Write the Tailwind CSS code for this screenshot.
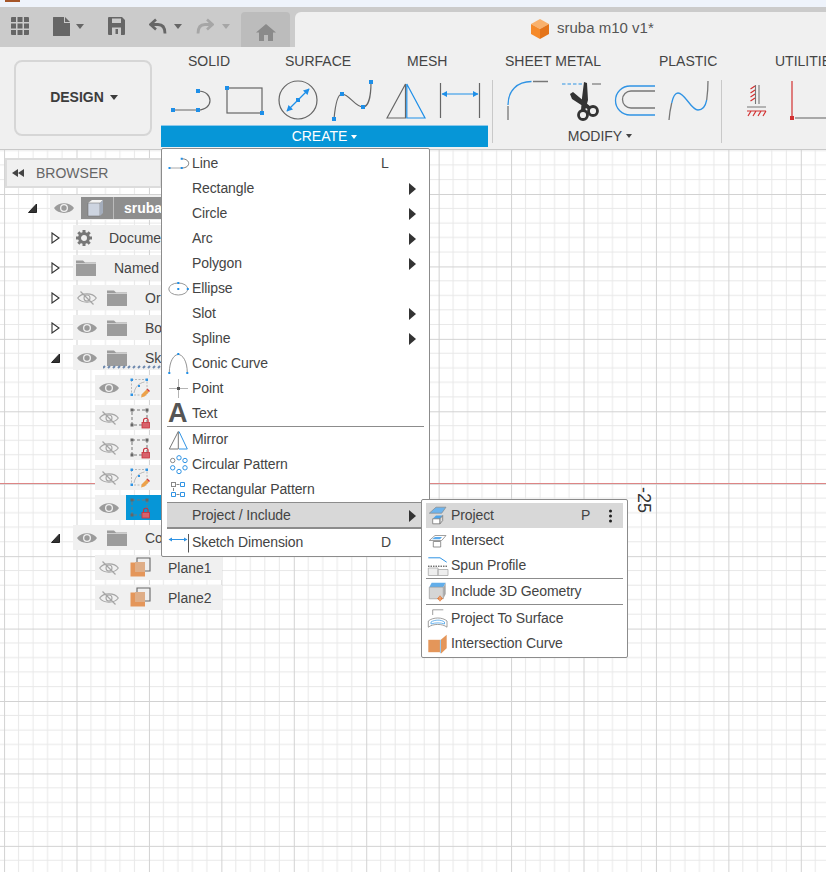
<!DOCTYPE html>
<html lang="en">

<head>
  <meta charset="UTF-8" />
  <title>sruba m10 v1*</title>
  <script src="https://cdn.jsdelivr.net/npm/@tailwindcss/browser@4"></script>
</head>

<body class="relative w-[826px] h-[872px] overflow-hidden bg-white text-[14px] text-[#444] font-['Liberation_Sans',sans-serif]">

  <!-- shared icons -->
  <svg class="hidden">
    <symbol id="eye" viewBox="0 0 20 14">
      <path d="M0 7C4 0.500 16 0.500 20 7C16 13.500 4 13.500 0 7Z" fill="#9b9b9b" />
      <circle cx="10" cy="7" r="4" fill="#f0f0f0" />
      <circle cx="10" cy="7" r="2.700" fill="#9b9b9b" />
    </symbol>
    <symbol id="eye-off" viewBox="0 0 20 14">
      <path d="M0.700 7C4.500 1.500 15.500 1.500 19.300 7C15.500 12.500 4.500 12.500 0.700 7Z" fill="none" stroke="#a5a5a5" stroke-width="1.100" />
      <circle cx="10" cy="7" r="3" fill="none" stroke="#a5a5a5" stroke-width="1.100" />
      <path d="M3.500 0.500L16.500 13.500" stroke="#a5a5a5" stroke-width="1.300" />
    </symbol>
    <symbol id="folder" viewBox="0 0 20 16">
      <path d="M0 0.500H7L9 2.500H20V16H0Z" fill="#9c9c9c" />
      <path d="M0 3.500H20" stroke="#f0f0f0" stroke-width="0.600" />
    </symbol>
    <symbol id="sketch-edit" viewBox="0 0 20 22">
      <rect x="1.500" y="2.500" width="15.500" height="15.500" fill="none" stroke="#aaa" stroke-width="0.800" stroke-dasharray="2 1.500" />
      <path d="M4 16C5 10 9 6 14.500 5" fill="none" stroke="#aaa" stroke-width="0.800" />
      <path d="M0.500 1.500h2.500v2.500H0.500zM15.500 1.500h2.500v2.500h-2.500zM0.500 16.500h2.500v2.500H0.500zM8 8h2v2H8z" fill="#2f93e4" />
      <path d="M11 20.500l1-3.500 4.500-4.500 2.500 2.500-4.500 4.500z" fill="#eda24a" />
      <path d="M16.500 12.500l1-1 2.500 2.500-1 1z" fill="#d43c3c" />
    </symbol>
    <symbol id="sketch-lock" viewBox="0 0 20 22">
      <rect x="2" y="3" width="15" height="15" fill="none" stroke="#777" stroke-dasharray="3 2" />
      <path d="M0.500 1.500h3v3h-3zM15.500 1.500h3v3h-3zM0.500 16.500h3v3h-3z" fill="#666" />
      <path d="M13.500 15.500V13.500a2.300 2.300 0 0 1 4.600 0V15.500" fill="none" stroke="#c8323c" stroke-width="1.100" />
      <rect x="12" y="15.500" width="7.500" height="5.500" fill="#d8616b" stroke="#c8323c" stroke-width="0.800" />
    </symbol>
    <symbol id="plane" viewBox="0 0 21 21">
      <path d="M7 5V1H20V14H15" fill="none" stroke="#666" stroke-width="1.100" />
      <rect x="0.500" y="5.500" width="14.500" height="14" fill="#e4965a" />
      <rect x="5" y="5" width="10" height="10" fill="#dfae88" />
    </symbol>
  </svg>

  <!-- browser strip -->
  <div class="h-[7px] bg-[#eef3fb]">
    <div class="ml-[5px] w-[15px] h-[2px] bg-[#a5562a]"></div>
  </div>

  <!-- document tabs -->
  <div class="flex h-[40px] bg-[#cbcbcb]">
    <div class="flex items-center w-[241px] pb-[2px]">
      <svg class="ml-[11px]" width="18" height="18" viewBox="0 0 18 18" fill="#666">
        <path d="M0 1a1 1 0 0 1 1-1h4v5H0zM6.500 0h5v5h-5zM13 0h4a1 1 0 0 1 1 1v4h-5zM0 6.500h5v5H0zM6.500 6.500h5v5h-5zM13 6.500h5v5h-5zM0 13h5v5H1a1 1 0 0 1-1-1zM6.500 13h5v5h-5zM13 13h5v4a1 1 0 0 1-1 1h-4z" />
      </svg>
      <svg class="ml-[24px]" width="17" height="19" viewBox="0 0 17 19" fill="#666">
        <path d="M0 0.500A.5.5 0 0 1 .5 0H11V6H17V18.500A.5.5 0 0 1 16.500 19H.5A.5.5 0 0 1 0 18.500Z" />
        <path d="M12 0L17 5H12Z" />
      </svg>
      <span class="ml-[6px] border-x-[4.500px] border-t-[5px] border-x-transparent border-t-[#666]"></span>
      <svg class="ml-[24px]" width="17" height="18" viewBox="0 0 17 18" fill="#666">
        <path fill-rule="evenodd" d="M1 0H14L17 3V17a1 1 0 0 1-1 1H1a1 1 0 0 1-1-1V1a1 1 0 0 1 1-1ZM4 1.500V6H13V1.500ZM4 10.500V18H13V10.500Z" />
        <rect x="7.500" y="12" width="2.500" height="5" />
      </svg>
      <svg class="ml-[24px]" width="18" height="17" viewBox="0 0 18 17" fill="none">
        <path d="M7 1.500L1.500 6.500L7 11.500" stroke="#666" stroke-width="2.600" />
        <path d="M2.500 6.500H9C13.500 6.500 16 9.500 16 15.500" stroke="#666" stroke-width="2.800" />
      </svg>
      <span class="ml-[7px] border-x-[4.500px] border-t-[5px] border-x-transparent border-t-[#666]"></span>
      <svg class="ml-[14px]" width="18" height="17" viewBox="0 0 18 17" fill="none">
        <path d="M11 1.500L16.500 6.500L11 11.500" stroke="#a6a6a6" stroke-width="2.600" />
        <path d="M15.500 6.500H9C4.500 6.500 2 9.500 2 15.500" stroke="#a6a6a6" stroke-width="2.800" />
      </svg>
      <span class="ml-[8px] border-x-[4.500px] border-t-[5px] border-x-transparent border-t-[#a6a6a6]"></span>
    </div>
    <div class="flex items-center justify-center w-[49px] mt-[5px] rounded-t bg-[#bcbcbc]">
      <svg class="mt-[6px]" width="20" height="17" viewBox="0 0 20 17" fill="#8a8a8a">
        <path d="M10 0L20 8.500H17V17H12V11H8V17H3V8.500H0Z" />
      </svg>
    </div>
    <div class="flex-1 flex items-center mt-[5px] ml-[5px] pb-[2px] pl-[236px] rounded-tl-md bg-[#f0f0f0]">
      <svg width="18" height="20" viewBox="0 0 18 20">
        <path d="M9 0L18 5L9 10L0 5Z" fill="#f9b16c" />
        <path d="M0 5L9 10V20L0 15Z" fill="#f58a2a" />
        <path d="M18 5L9 10V20L18 15Z" fill="#e4741a" />
      </svg>
      <span class="ml-[8px] text-[15px] text-[#555]">sruba m10 v1*</span>
    </div>
  </div>

  <!-- toolbar -->
  <div class="flex h-[103px] bg-[#f0f0f0] border-b border-[#c9c9c9]">
    <div class="flex items-center justify-center gap-[6px] ml-[14px] mt-[13px] pb-[2px] pl-[2px] w-[138px] h-[76px] rounded-lg border-2 border-[#d6d6d6] font-bold text-[#3c3c3c]">
      DESIGN
      <span class="border-x-[4px] border-t-[5px] border-x-transparent border-t-[#3c3c3c]"></span>
    </div>

    <div class="ml-[9px] flex flex-col w-[665px] shrink-0">
      <div class="flex items-center h-[28px] pl-[27px] whitespace-nowrap">
        <span class="w-[97px] shrink-0">SOLID</span>
        <span class="w-[122px] shrink-0">SURFACE</span>
        <span class="w-[98px] shrink-0">MESH</span>
        <span class="w-[154px] shrink-0">SHEET METAL</span>
        <span class="w-[116px] shrink-0">PLASTIC</span>
        <span class="w-[51px] shrink-0 overflow-hidden">UTILITIES</span>
      </div>

      <div class="flex mt-[5px]">
        <!-- create group -->
        <div class="w-[327px] shrink-0">
          <div class="flex gap-[10px] pl-[8px] h-[44px]">
            <svg width="44" height="44" viewBox="0 0 44 44" fill="none">
              <path d="M4 30H29M29 11C45 11 45 30 29 30" stroke="#666" stroke-width="1.200" />
              <path d="M2 28h4v4H2zM27 28h4v4h-4zM27 9h4v4h-4z" fill="#1e8fe8" />
            </svg>
            <svg width="44" height="44" viewBox="0 0 44 44" fill="none">
              <rect x="4" y="8" width="35" height="25" stroke="#666" stroke-width="1.200" />
              <path d="M2 6h4v4H2zM37 31h4v4h-4z" fill="#1e8fe8" />
            </svg>
            <svg width="44" height="44" viewBox="0 0 44 44" fill="none">
              <circle cx="21" cy="20" r="19" stroke="#666" stroke-width="1.200" />
              <path d="M10 31L32 9" stroke="#1e8fe8" stroke-width="1.300" />
              <path d="M32.500 8.500L26 10.500L30.500 15ZM9.500 31.500L16 29.500L11.500 25Z" fill="#1e8fe8" />
              <path d="M19 18h4v4h-4z" fill="#1e8fe8" />
            </svg>
            <svg width="44" height="44" viewBox="0 0 44 44" fill="none">
              <path d="M3 39C4 28 6 14 11 14C18 14 24 27 32 27C38 27 40 14 40 2" stroke="#666" stroke-width="1.200" />
              <path d="M1 37h4v4H1zM9 12h4v4H9zM30 25h4v4h-4zM38 0h4v4h-4z" fill="#1e8fe8" />
            </svg>
            <svg width="44" height="44" viewBox="0 0 44 44" fill="none">
              <path d="M2 38L20.500 4V38Z" stroke="#666" stroke-width="1.200" />
              <path d="M21.800 4L40 38H21.800Z" stroke="#1e8fe8" stroke-width="1.200" />
            </svg>
            <svg width="44" height="44" viewBox="0 0 44 44" fill="none">
              <path d="M1.500 3V38M40.500 3V38" stroke="#666" stroke-width="1.200" />
              <path d="M3 14H39" stroke="#1e8fe8" stroke-width="1.200" />
              <path d="M2.500 14L8 11V17ZM39.500 14L34 11V17Z" fill="#1e8fe8" />
            </svg>
          </div>
          <div class="flex items-center justify-center gap-[4px] mt-[1px] h-[22px] border-t border-[#8cc8ea] bg-[#0696d7] text-white">
            CREATE
            <span class="border-x-[3.500px] border-t-[4.500px] border-x-transparent border-t-white"></span>
          </div>
        </div>

        <div class="ml-[4px] w-px h-[63px] bg-[#c9c9c9] shrink-0"></div>

        <!-- modify group -->
        <div class="w-[228px] shrink-0">
          <div class="flex gap-[10px] pl-[13px] h-[44px]">
            <svg width="44" height="44" viewBox="0 0 44 44" fill="none">
              <path d="M2 25C2 11 11 1.500 25.500 1.500" stroke="#2f93e4" stroke-width="1.300" />
              <path d="M2 26V40M27 1.500H42" stroke="#777" stroke-width="1.300" />
            </svg>
            <svg width="44" height="44" viewBox="0 0 44 44" fill="none">
              <path d="M2 4H24" stroke="#2f93e4" stroke-width="1.200" stroke-dasharray="3.500 2" />
              <path d="M32 4H41" stroke="#777" stroke-width="1.200" />
              <path d="M10 14L13 12L31 27L29 30L12 19ZM24 2L27 3L28 20L25 31L21 30L22 18Z" fill="#333" />
              <circle cx="23" cy="35" r="4.500" stroke="#333" stroke-width="2.800" />
              <circle cx="33" cy="31" r="4.500" stroke="#333" stroke-width="2.800" />
            </svg>
            <svg width="44" height="44" viewBox="0 0 44 44" fill="none">
              <path d="M41 6H16A14.500 14.500 0 0 0 16 35H41" stroke="#2f93e4" stroke-width="1.300" />
              <path d="M41 11H17A8.500 8.500 0 0 0 17 28H41" stroke="#777" stroke-width="1.300" />
            </svg>
            <svg width="44" height="44" viewBox="0 0 44 44" fill="none">
              <path d="M1 40C1.500 33 2.500 28 3.700 23M38.700 20C39.500 14 40 8 40 1" stroke="#777" stroke-width="1.300" />
              <path d="M3.700 23C5 17 7 13 10 13C17 13 23 30 30 30C35 30 37.500 26 38.700 20" stroke="#2f93e4" stroke-width="1.300" />
            </svg>
          </div>
          <div class="flex items-center justify-center gap-[4px] mt-[1px] pr-[14px] h-[22px]">
            MODIFY
            <span class="border-x-[3.500px] border-t-[4.500px] border-x-transparent border-t-[#444]"></span>
          </div>
        </div>

        <div class="w-px h-[63px] bg-[#c9c9c9] shrink-0"></div>

        <!-- utilities group -->
        <div class="flex pl-[23px] h-[44px]">
          <svg width="40" height="44" viewBox="0 0 40 44" fill="none">
            <path d="M10.500 5V24M14 5V24M2 27H21" stroke="#777" stroke-width="1.100" />
            <path d="M10 6L5.500 9M10 10L5.500 13M10 14L5.500 17M10 18L5.500 21M2 31H21M6 31L3 36M11 31L8 36M16 31L13 36M21 31L18 36" stroke="#d23030" stroke-width="1.200" />
          </svg>
          <svg width="41" height="44" viewBox="0 0 41 44" fill="none">
            <path d="M7 1V36" stroke="#d23030" stroke-width="1.200" />
            <path d="M5 36h4v4H5z" fill="#d23030" />
            <path d="M10 38H41" stroke="#777" stroke-width="1.200" />
          </svg>
        </div>
      </div>
    </div>
  </div>

  <!-- canvas -->
  <div class="relative h-[722px] overflow-hidden">
    <svg class="absolute inset-0" width="826" height="722">
      <defs>
        <pattern id="grid" patternUnits="userSpaceOnUse" x="4.070" y="44" width="72.430" height="72.430">
          <path d="M14.490 0V72.430M28.970 0V72.430M43.460 0V72.430M57.940 0V72.430M0 14.490H72.430M0 28.970H72.430M0 43.460H72.430M0 57.940H72.430" stroke="#e8e8e8" />
          <path d="M0.500 0V72.430M0 0.500H72.430" stroke="#d2d2d2" />
        </pattern>
      </defs>
      <rect width="826" height="722" fill="url(#grid)" />
    </svg>
    <div class="absolute left-0 right-0 top-[333px] h-px bg-[#dd8585]"></div>
    <div class="absolute left-[635px] top-[337px] text-[18px] leading-[18px] text-[#333] [writing-mode:vertical-rl]">-25</div>

    <!-- browser panel header -->
    <div class="absolute left-[5px] top-[8px] flex items-center w-[157px] h-[30px] border-2 border-[#dcdcdc] bg-[#f0f0f0] text-[#666]">
      <svg class="ml-[5px]" width="12" height="8" viewBox="0 0 12 8" fill="#444">
        <path d="M6 0V8L0 4ZM12 0V8L6 4Z" />
      </svg>
      <span class="ml-[12px]">BROWSER</span>
    </div>

    <!-- browser tree, names are cut off where the create menu covers them -->
    <div class="absolute left-0 top-[45px] w-[222px] flex flex-col gap-[5px] whitespace-nowrap">
      <div class="flex items-center h-[25px] pl-[28px]">
        <svg class="w-[22px] shrink-0" width="22" height="10" viewBox="0 0 22 10"><path d="M0.500 9.500L8.500 1V9.500Z" fill="#333" stroke="#222" /></svg>
        <div class="flex items-center w-[111px] h-[25px] bg-[#f0f0f0] pl-[4px]">
          <svg width="20" height="14"><use href="#eye" /></svg>
          <div class="flex items-center ml-[7px] w-[80px] h-[22px] bg-[#8e8e8e] overflow-hidden">
            <svg class="ml-[6px] shrink-0" width="17" height="18" viewBox="0 0 17 18">
              <path d="M1 4L5 1H16L13 4Z" fill="#f4f4f4" />
              <path d="M1 4H13V17H1Z" fill="#cdd4e0" stroke="#666" stroke-width="0.500" />
              <path d="M13 4L16 1V14L13 17Z" fill="#a4adbc" />
            </svg>
            <div class="ml-[9px] mr-[10px] w-px h-[22px] bg-[#bbb] shrink-0"></div>
            <span class="mt-[2px] font-bold text-white">sruba</span>
          </div>
        </div>
      </div>

      <div class="flex items-center h-[25px] pl-[51px]">
        <svg class="w-[22px] shrink-0" width="22" height="12" viewBox="0 0 22 12"><path d="M1 1L8 6L1 11Z" fill="#fff" stroke="#333" stroke-width="1.100" /></svg>
        <div class="flex items-center w-[88px] h-[25px] bg-[#f0f0f0] overflow-hidden pl-[3px]">
          <svg class="shrink-0" width="16" height="16" viewBox="0 0 16 16">
            <circle cx="8" cy="8" r="4.500" fill="none" stroke="#777" stroke-width="3" />
            <path d="M8 0V3M8 13V16M0 8H3M13 8H16M2.300 2.300L4.500 4.500M11.500 11.500L13.700 13.700M13.700 2.300L11.500 4.500M4.500 11.500L2.300 13.700" stroke="#777" stroke-width="3" />
          </svg>
          <span class="ml-[17px] mt-[2px]">Documen</span>
        </div>
      </div>

      <div class="flex items-center h-[25px] pl-[51px]">
        <svg class="w-[22px] shrink-0" width="22" height="12" viewBox="0 0 22 12"><path d="M1 1L8 6L1 11Z" fill="#fff" stroke="#333" stroke-width="1.100" /></svg>
        <div class="flex items-center w-[88px] h-[25px] bg-[#f0f0f0] overflow-hidden pl-[3px]">
          <svg class="shrink-0" width="20" height="16"><use href="#folder" /></svg>
          <span class="ml-[18px] mt-[2px]">Named</span>
        </div>
      </div>

      <div class="flex items-center h-[25px] pl-[51px]">
        <svg class="w-[22px] shrink-0" width="22" height="12" viewBox="0 0 22 12"><path d="M1 1L8 6L1 11Z" fill="#fff" stroke="#333" stroke-width="1.100" /></svg>
        <div class="flex items-center w-[88px] h-[25px] bg-[#f0f0f0] overflow-hidden pl-[4px]">
          <svg class="shrink-0" width="20" height="14"><use href="#eye-off" /></svg>
          <svg class="ml-[10px] shrink-0" width="20" height="16"><use href="#folder" /></svg>
          <span class="ml-[18px] mt-[2px]">Or</span>
        </div>
      </div>

      <div class="flex items-center h-[25px] pl-[51px]">
        <svg class="w-[22px] shrink-0" width="22" height="12" viewBox="0 0 22 12"><path d="M1 1L8 6L1 11Z" fill="#fff" stroke="#333" stroke-width="1.100" /></svg>
        <div class="flex items-center w-[88px] h-[25px] bg-[#f0f0f0] overflow-hidden pl-[4px]">
          <svg class="shrink-0" width="20" height="14"><use href="#eye" /></svg>
          <svg class="ml-[10px] shrink-0" width="20" height="16"><use href="#folder" /></svg>
          <span class="ml-[18px] mt-[2px]">Bo</span>
        </div>
      </div>

      <div class="relative flex items-center h-[25px] pl-[51px]">
        <svg class="w-[22px] shrink-0" width="22" height="10" viewBox="0 0 22 10"><path d="M0.500 9.500L8.500 1V9.500Z" fill="#333" stroke="#222" /></svg>
        <div class="flex items-center w-[88px] h-[25px] bg-[#f0f0f0] overflow-hidden pl-[4px]">
          <svg class="shrink-0" width="20" height="14"><use href="#eye" /></svg>
          <svg class="ml-[10px] shrink-0" width="20" height="16"><use href="#folder" /></svg>
          <span class="ml-[18px] mt-[2px]">Sk</span>
        </div>
        <svg class="absolute left-[103px] top-[20px]" width="58" height="4" viewBox="0 0 58 4">
          <path d="M0 3L2 1M5 3L7 1M10 3L12 1M15 3L17 1M20 3L22 1M25 3L27 1M30 3L32 1M35 3L37 1M40 3L42 1M45 3L47 1M50 3L52 1M55 3L57 1" stroke="#6d88ad" stroke-width="2" />
        </svg>
      </div>

      <div class="flex items-center ml-[95px] w-[66px] h-[25px] bg-[#f0f0f0] pl-[4px]">
        <svg width="20" height="14"><use href="#eye" /></svg>
        <svg class="ml-[11px]" width="20" height="22"><use href="#sketch-edit" /></svg>
      </div>
      <div class="flex items-center ml-[95px] w-[66px] h-[25px] bg-[#f0f0f0] pl-[4px]">
        <svg width="20" height="14"><use href="#eye-off" /></svg>
        <svg class="ml-[11px]" width="20" height="22"><use href="#sketch-lock" /></svg>
      </div>
      <div class="flex items-center ml-[95px] w-[66px] h-[25px] bg-[#f0f0f0] pl-[4px]">
        <svg width="20" height="14"><use href="#eye-off" /></svg>
        <svg class="ml-[11px]" width="20" height="22"><use href="#sketch-lock" /></svg>
      </div>
      <div class="flex items-center ml-[95px] w-[66px] h-[25px] bg-[#f0f0f0] pl-[4px]">
        <svg width="20" height="14"><use href="#eye-off" /></svg>
        <svg class="ml-[11px]" width="20" height="22"><use href="#sketch-edit" /></svg>
      </div>
      <div class="flex items-center ml-[95px] w-[66px] h-[25px] bg-[#f0f0f0] pl-[4px]">
        <svg class="shrink-0" width="20" height="14"><use href="#eye" /></svg>
        <div class="flex items-center ml-[7px] w-[35px] h-[25px] bg-[#0696d7] pl-[4px]">
          <svg width="20" height="22"><use href="#sketch-lock" /></svg>
        </div>
      </div>

      <div class="flex items-center h-[25px] pl-[51px]">
        <svg class="w-[22px] shrink-0" width="22" height="10" viewBox="0 0 22 10"><path d="M0.500 9.500L8.500 1V9.500Z" fill="#333" stroke="#222" /></svg>
        <div class="flex items-center w-[88px] h-[25px] bg-[#f0f0f0] overflow-hidden pl-[4px]">
          <svg class="shrink-0" width="20" height="14"><use href="#eye" /></svg>
          <svg class="ml-[10px] shrink-0" width="20" height="16"><use href="#folder" /></svg>
          <span class="ml-[18px] mt-[2px]">Co</span>
        </div>
      </div>

      <div class="flex items-center ml-[95px] w-[127px] h-[25px] bg-[#f0f0f0] pl-[4px]">
        <svg width="20" height="14"><use href="#eye-off" /></svg>
        <svg class="ml-[11px]" width="21" height="21"><use href="#plane" /></svg>
        <span class="ml-[17px] mt-[2px]">Plane1</span>
      </div>
      <div class="flex items-center ml-[95px] w-[127px] h-[25px] bg-[#f0f0f0] pl-[4px]">
        <svg width="20" height="14"><use href="#eye-off" /></svg>
        <svg class="ml-[11px]" width="21" height="21"><use href="#plane" /></svg>
        <span class="ml-[17px] mt-[2px]">Plane2</span>
      </div>
    </div>
  </div>

  <!-- create menu -->
  <div class="absolute left-[161px] top-[148px] w-[269px] px-[5px] pt-[2px] pb-[1px] rounded-[2px] border border-[#8c8c8c] bg-white tracking-[-0.1px] whitespace-nowrap">
    <div class="grid grid-cols-[25px_189px_28px_15px] items-center h-[25px]">
      <svg class="ml-px" width="22" height="22" viewBox="0 0 22 22" fill="none">
        <path d="M1.300 15H13.700" stroke="#aaa" />
        <path d="M13.700 5.800C23 5.800 23 15 13.700 15" stroke="#777" />
        <path d="M0.500 14h2v2h-2zM12.700 14h2v2h-2zM12.700 4.800h2v2h-2z" fill="#1e8fe8" />
      </svg>
      <span>Line</span><span>L</span>
    </div>
    <div class="grid grid-cols-[25px_189px_28px_15px] items-center h-[25px]">
      <span></span><span>Rectangle</span><span></span>
      <span class="border-y-[6px] border-l-[7px] border-y-transparent border-l-[#333] w-0"></span>
    </div>
    <div class="grid grid-cols-[25px_189px_28px_15px] items-center h-[25px]">
      <span></span><span>Circle</span><span></span>
      <span class="border-y-[6px] border-l-[7px] border-y-transparent border-l-[#333] w-0"></span>
    </div>
    <div class="grid grid-cols-[25px_189px_28px_15px] items-center h-[25px]">
      <span></span><span>Arc</span><span></span>
      <span class="border-y-[6px] border-l-[7px] border-y-transparent border-l-[#333] w-0"></span>
    </div>
    <div class="grid grid-cols-[25px_189px_28px_15px] items-center h-[25px]">
      <span></span><span>Polygon</span><span></span>
      <span class="border-y-[6px] border-l-[7px] border-y-transparent border-l-[#333] w-0"></span>
    </div>
    <div class="grid grid-cols-[25px_189px_28px_15px] items-center h-[25px]">
      <svg class="ml-px" width="22" height="22" viewBox="0 0 22 22" fill="none">
        <ellipse cx="10.300" cy="11" rx="9.500" ry="6" stroke="#999" />
        <path d="M9.300 10h2v2h-2zM9.300 4h2v2h-2zM18.800 10h2v2h-2z" fill="#1e8fe8" />
      </svg>
      <span>Ellipse</span>
    </div>
    <div class="grid grid-cols-[25px_189px_28px_15px] items-center h-[25px]">
      <span></span><span>Slot</span><span></span>
      <span class="border-y-[6px] border-l-[7px] border-y-transparent border-l-[#333] w-0"></span>
    </div>
    <div class="grid grid-cols-[25px_189px_28px_15px] items-center h-[25px]">
      <span></span><span>Spline</span><span></span>
      <span class="border-y-[6px] border-l-[7px] border-y-transparent border-l-[#333] w-0"></span>
    </div>
    <div class="grid grid-cols-[25px_189px_28px_15px] items-center h-[25px]">
      <svg class="ml-px" width="22" height="22" viewBox="0 0 22 22" fill="none">
        <path d="M1.300 20C1.300 8 6 1.500 10.300 1.500C14.500 1.500 19.300 8 19.300 20" stroke="#888" stroke-width="0.900" />
        <path d="M0.300 19h2v2h-2zM18.300 19h2v2h-2zM9.300 0h2v2h-2z" fill="#1e8fe8" />
      </svg>
      <span>Conic Curve</span>
    </div>
    <div class="grid grid-cols-[25px_189px_28px_15px] items-center h-[25px]">
      <svg class="ml-px" width="22" height="22" viewBox="0 0 22 22" fill="none">
        <path d="M1 10.500H20M10.500 1V20" stroke="#b5b5b5" />
        <rect x="9" y="9" width="3" height="3" fill="#555" />
      </svg>
      <span>Point</span>
    </div>
    <div class="grid grid-cols-[25px_189px_28px_15px] items-center h-[25px]">
      <span class="ml-px text-[27px] leading-[25px] font-bold text-[#555]">A</span>
      <span>Text</span>
    </div>

    <div class="h-px bg-[#8c8c8c]"></div>

    <div class="grid grid-cols-[25px_189px_28px_15px] items-center h-[25px]">
      <svg class="ml-px" width="22" height="22" viewBox="0 0 22 22" fill="none">
        <path d="M1.300 20L10.300 2.500V20Z" stroke="#777" />
        <path d="M11 2.500L19.300 20H11" stroke="#2f93e4" />
      </svg>
      <span>Mirror</span>
    </div>
    <div class="grid grid-cols-[25px_189px_28px_15px] items-center h-[25px]">
      <svg class="ml-px" width="22" height="22" viewBox="0 0 22 22" fill="none">
        <circle cx="4.700" cy="6.500" r="2.200" stroke="#888" />
        <path d="M13.200 3.800a2.200 2.200 0 1 1-4.400 0a2.200 2.200 0 1 1 4.400 0ZM19.200 6.500a2.200 2.200 0 1 1-4.400 0a2.200 2.200 0 1 1 4.400 0ZM6.900 13.800a2.200 2.200 0 1 1-4.400 0a2.200 2.200 0 1 1 4.400 0ZM19.200 13.800a2.200 2.200 0 1 1-4.400 0a2.200 2.200 0 1 1 4.400 0ZM13.200 17.500a2.200 2.200 0 1 1-4.400 0a2.200 2.200 0 1 1 4.400 0Z" stroke="#2f93e4" />
      </svg>
      <span>Circular Pattern</span>
    </div>
    <div class="grid grid-cols-[25px_189px_28px_15px] items-center h-[25px]">
      <svg class="ml-px" width="22" height="22" viewBox="0 0 22 22" fill="none">
        <rect x="3.500" y="3.500" width="4" height="4" stroke="#888" />
        <path d="M12.500 3.500h4v4h-4zM3.500 13.500h4v4h-4zM12.500 13.500h4v4h-4z" stroke="#2f93e4" />
        <path d="M8.500 5.500H11.500M8.500 15.500H11.500M5.500 9V12" stroke="#888" />
      </svg>
      <span>Rectangular Pattern</span>
    </div>

    <div class="grid grid-cols-[25px_189px_28px_15px] items-center h-[27px] pt-[1px] border-t border-b-2 border-[#8c8c8c] bg-[#d8d8d8]">
      <span></span><span>Project / Include</span><span></span>
      <span class="border-y-[6px] border-l-[7px] border-y-transparent border-l-[#333] w-0"></span>
    </div>

    <div class="grid grid-cols-[25px_189px_28px_15px] items-center h-[26px] pt-[1px]">
      <svg class="ml-px" width="22" height="22" viewBox="0 0 22 22" fill="none">
        <path d="M1 7.500H19" stroke="#2f93e4" />
        <path d="M0.500 7.500L4 5.500V9.500ZM19.500 7.500L16 5.500V9.500Z" fill="#2f93e4" />
        <path d="M20.500 2V20.500" stroke="#555" />
      </svg>
      <span>Sketch Dimension</span><span>D</span>
    </div>
  </div>

  <!-- project / include submenu -->
  <div class="absolute left-[421px] top-[499px] w-[207px] px-[4px] pt-[3px] pb-[1px] rounded-[2px] border border-[#8c8c8c] bg-white tracking-[-0.1px] whitespace-nowrap">
    <div class="grid grid-cols-[25px_130px_23px_13px_6px] items-center h-[25px] bg-[#d8d8d8]">
      <svg class="ml-px" width="22" height="22" viewBox="0 0 22 22" fill="none">
        <path d="M2.300 8.200L9 2.200H19L14.700 8.200Z" fill="#6db4ee" stroke="#888" stroke-width="0.700" />
        <path d="M5.700 13.800L9 10.500H15.700L13 13.800Z" fill="#4ba3ea" />
        <path d="M5.700 13.800H13V18.800H5.700Z" fill="#fff" stroke="#777" stroke-width="0.800" />
        <path d="M13 13.800L15.700 10.500V15.500L13 18.800Z" fill="#ddd" stroke="#777" stroke-width="0.800" />
      </svg>
      <span>Project</span><span>P</span>
      <svg width="13" height="16" viewBox="0 0 13 16" fill="#222">
        <circle cx="6.500" cy="3" r="1.500" /><circle cx="6.500" cy="8" r="1.500" /><circle cx="6.500" cy="13" r="1.500" />
      </svg>
    </div>
    <div class="grid grid-cols-[25px_130px_23px_13px_6px] items-center h-[25px]">
      <svg class="ml-px" width="22" height="22" viewBox="0 0 22 22" fill="none">
        <path d="M2.300 10.500L8 5.500H19L14.700 10.500Z" stroke="#888" stroke-width="0.800" />
        <path d="M5 9.300L8 7H15L13 9.300Z" fill="#5aaaec" />
        <path d="M6.300 11.500H13.700V17H6.300Z" fill="#fff" stroke="#777" stroke-width="0.800" />
      </svg>
      <span>Intersect</span>
    </div>
    <div class="grid grid-cols-[25px_130px_23px_13px_6px] items-center h-[25px]">
      <svg class="ml-px" width="22" height="22" viewBox="0 0 22 22" fill="none">
        <path d="M1.300 2.800H13L19.700 7.200" stroke="#2f93e4" />
        <path d="M1 11.200H21" stroke="#333" stroke-dasharray="1.500 1" />
        <path d="M1.300 13H11V20.500H1.300ZM11 14.500H21V20.500H11Z" fill="#eee" stroke="#aaa" stroke-width="0.800" />
      </svg>
      <span>Spun Profile</span>
    </div>
    <div class="h-px bg-[#8c8c8c]"></div>
    <div class="grid grid-cols-[25px_130px_23px_13px_6px] items-center h-[25px]">
      <svg class="ml-px" width="22" height="22" viewBox="0 0 22 22" fill="none">
        <path d="M2.300 6.200L4.600 1.800H18.700L16.300 6.200Z" fill="#62aeea" />
        <path d="M2.300 6.200H16.300V17.800H2.300Z" fill="#d5d5d5" stroke="#999" stroke-width="0.700" />
        <path d="M16.300 6.200L18.700 1.800V13L16.300 17.800Z" fill="#a8a8a8" />
        <circle cx="13" cy="17.500" r="1.700" fill="#fff" stroke="#e0702a" />
        <path d="M13 14.500V20.500M10 17.500H16" stroke="#e0702a" stroke-width="0.600" />
      </svg>
      <span>Include 3D Geometry</span>
    </div>
    <div class="h-px bg-[#8c8c8c]"></div>
    <div class="grid grid-cols-[25px_130px_23px_13px_6px] items-center h-[26px] pt-[1px]">
      <svg class="ml-px" width="22" height="22" viewBox="0 0 22 22" fill="none">
        <path d="M5.700 7V1.800H16.300" stroke="#888" stroke-width="0.800" />
        <path d="M1.300 19.200V13C6 9 15.500 9 20 13V19.200C15.500 15.500 6 15.500 1.300 19.200Z" stroke="#888" stroke-width="0.800" />
        <path d="M4 14C8 11.500 14 11.500 17.500 14V16C14 14.500 8 14.500 4 16Z" stroke="#4ba3ea" stroke-width="0.800" />
      </svg>
      <span>Project To Surface</span>
    </div>
    <div class="grid grid-cols-[25px_130px_23px_13px_6px] items-center h-[25px]">
      <svg class="ml-px" width="22" height="22" viewBox="0 0 22 22">
        <path d="M1.300 6.800H13V19.200H1.300Z" fill="#e4965a" />
        <path d="M13.800 6.800L19.700 1.800V15.200L13.800 20.800Z" fill="#e4965a" />
        <path d="M13.400 6.800V20" stroke="#8cc4ee" />
      </svg>
      <span>Intersection Curve</span>
    </div>
  </div>

</body>

</html>
